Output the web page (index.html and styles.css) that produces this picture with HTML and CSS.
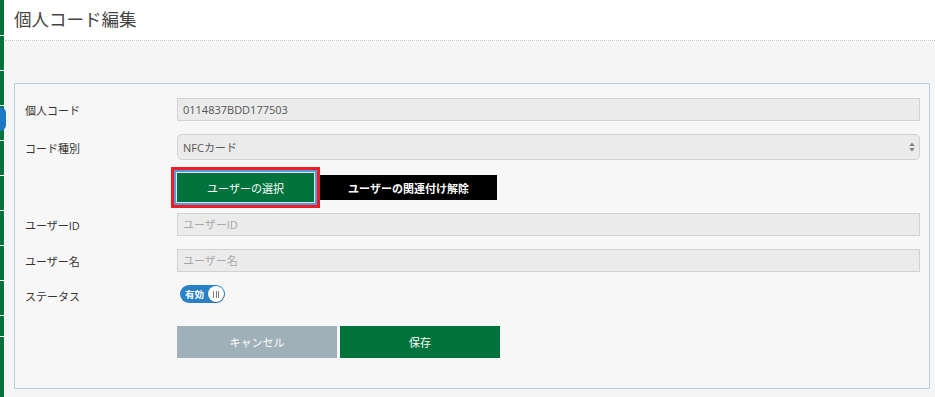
FILE: index.html
```
<!DOCTYPE html>
<html lang="ja">
<head>
    <meta charset="UTF-8">
    <meta name="viewport" content="width=device-width, initial-scale=1.0">
    <title>個人コード編集</title>
    <link rel="stylesheet" href="styles.css">
</head>
<body>
    <div class="layout">
        <nav class="sidebar">
            <span class="nav-item first"></span>
            <span class="nav-item"></span>
            <span class="nav-item"></span>
            <span class="nav-item"></span>
            <span class="nav-item"></span>
            <span class="nav-item"></span>
            <span class="nav-item"></span>
            <span class="nav-item"></span>
            <span class="nav-item"></span>
            <span class="nav-item short"></span>
            <span class="nav-item fill"></span>
            <span class="sidebar-handle"></span>
        </nav>

        <main class="main">
            <header class="page-header">
                <h1>個人コード編集</h1>
            </header>

            <section class="content">
                <form class="panel">
                    <div class="form-row">
                        <label for="code">個人コード</label>
                        <input type="text" id="code" class="field" value="0114837BDD177503" readonly>
                    </div>
                    <div class="form-row">
                        <label>コード種別</label>
                        <div class="select">
                            <span>NFCカード</span>
                            <svg width="6" height="10" viewBox="0 0 6 10">
                                <path d="M3 0.5 L5.6 4 L0.4 4 Z M3 9.5 L5.6 6 L0.4 6 Z" fill="#808080"/>
                            </svg>
                        </div>
                    </div>
                    <div class="form-actions user-actions">
                        <button type="button" class="btn btn-green btn-focus">ユーザーの選択</button>
                        <button type="button" class="btn btn-black">ユーザーの関連付け解除</button>
                    </div>
                    <div class="form-row">
                        <label for="userId">ユーザーID</label>
                        <input type="text" id="userId" class="field" placeholder="ユーザーID" readonly>
                    </div>
                    <div class="form-row">
                        <label for="userName">ユーザー名</label>
                        <input type="text" id="userName" class="field" placeholder="ユーザー名" readonly>
                    </div>
                    <div class="form-row status-row">
                        <label>ステータス</label>
                        <div class="toggle-wrap">
                            <span class="toggle">
                                <span class="toggle-text">有効</span>
                                <span class="toggle-knob"><i></i><i></i><i></i></span>
                            </span>
                        </div>
                    </div>
                    <div class="form-actions submit-actions">
                        <button type="button" class="btn btn-gray btn-wide">キャンセル</button>
                        <button type="submit" class="btn btn-green btn-wide">保存</button>
                    </div>
                </form>
            </section>
        </main>
    </div>
</body>
</html>
```

FILE: styles.css
```
* {
    box-sizing: border-box;
}

html, body {
    height: 100%;
}

body {
    margin: 0;
    font-family: "Open Sans", "Noto Sans CJK JP", sans-serif;
    color: #333;
    overflow: hidden;
}

.layout {
    display: flex;
    height: 100vh;
}

/* left navigation strip */
.sidebar {
    position: relative;
    z-index: 2;
    width: 5px;
    flex-shrink: 0;
    display: flex;
    flex-direction: column;
    gap: 1px;
    background: #fff;
}

.nav-item {
    display: block;
    width: 4px;
    height: 34px;
    background: #00733a;
}

.nav-item.first {
    height: 35px;
}

.nav-item.short {
    height: 20px;
}

.nav-item.fill {
    flex: 1;
}

.sidebar-handle {
    position: absolute;
    left: 0;
    top: 107px;
    width: 6px;
    height: 24px;
    border-radius: 0 12px 12px 0 / 0 12px 12px 0;
    background: #1b78c2;
}

.main {
    flex: 1;
    display: flex;
    flex-direction: column;
    min-width: 0;
}

.page-header {
    height: 42px;
    padding-left: 9px;
    background: #fff;
    border-bottom: 1px dotted #c8c8c8;
}

.page-header h1 {
    margin: 0;
    font-size: 17.5px;
    font-weight: normal;
    line-height: 39px;
    color: #444;
}

.content {
    flex: 1;
    padding: 42px 5px 8px 9px;
    background: #f5f5f5;
}

.panel {
    padding: 14px 9px 30px 10px;
    background: #f7f7f7;
    border: 1px solid #bccddb;
}

.form-row {
    display: grid;
    grid-template-columns: 152px 1fr;
    align-items: center;
    margin-bottom: 13px;
}

.form-row label {
    padding-top: 2px;
    font-size: 11px;
    line-height: 15px;
    color: #333;
}

.field {
    display: block;
    width: 100%;
    height: 23px;
    padding: 0 5px;
    font-family: inherit;
    font-size: 11px;
    color: #555;
    background: #ebebeb;
    border: 1px solid #d2d2d2;
    border-radius: 0;
    outline: none;
}

.field::placeholder {
    color: #a8a8a8;
}

.select {
    display: flex;
    align-items: center;
    justify-content: space-between;
    height: 26px;
    padding: 0 4px 0 5px;
    font-size: 11px;
    color: #555;
    background: #ebebeb;
    border: 1px solid #d2d2d2;
    border-radius: 5px;
}

.status-row {
    margin-bottom: 23px;
}

.status-row label {
    padding-top: 6px;
    line-height: 12px;
}

.toggle-wrap {
    display: flex;
    height: 18px;
}

.toggle {
    display: inline-flex;
    align-items: center;
    justify-content: space-between;
    width: 45px;
    height: 18px;
    margin-left: 3px;
    padding: 1px;
    border-radius: 9px;
    background: #2a81c6;
}

.toggle-text {
    padding-left: 4px;
    font-size: 9.5px;
    font-weight: bold;
    color: #fff;
}

.toggle-knob {
    display: flex;
    align-items: center;
    justify-content: center;
    gap: 1.5px;
    width: 16px;
    height: 16px;
    border-radius: 50%;
    background: #fff;
    box-shadow: 0 1px 1px rgba(0, 0, 0, 0.25);
}

.toggle-knob i {
    display: block;
    width: 1px;
    height: 7px;
    background: #7d7d7d;
}

.form-actions {
    display: flex;
    align-items: center;
    padding-left: 152px;
}

.user-actions {
    gap: 6px;
    margin: 11px 0;
}

.submit-actions {
    gap: 3px;
}

.btn {
    padding: 0;
    font-family: inherit;
    font-size: 11px;
    color: #fff;
    border: none;
    border-radius: 0;
    cursor: pointer;
}

.btn-green {
    background: #00733c;
}

.btn-focus {
    width: 137px;
    height: 29px;
    box-shadow: 0 0 0 1px #d8e6f3, 0 0 0 2px #5b9ad8, 0 0 0 3px #5b9ad8, 0 0 0 6px #ee1c24;
}

.btn-black {
    width: 177px;
    height: 25px;
    font-weight: bold;
    background: #000;
}

.btn-gray {
    background: #9fb0b9;
}

.btn-wide {
    width: 160px;
    height: 32px;
}
```
